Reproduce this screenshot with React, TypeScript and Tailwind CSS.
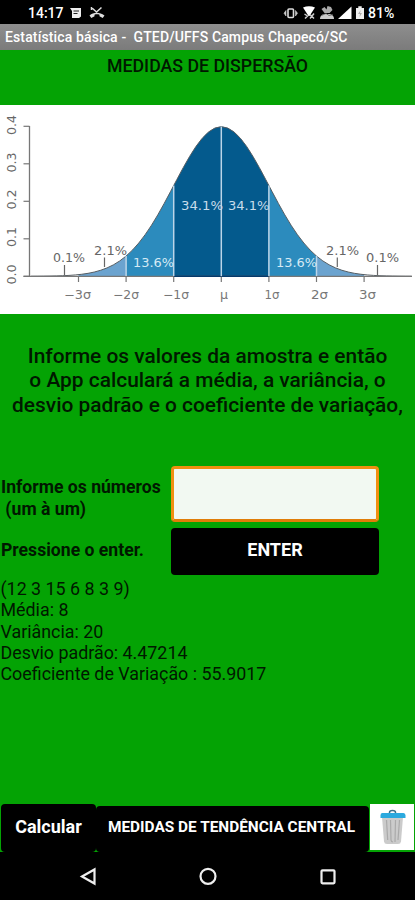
const MU = 221.3;
const SIGMA = 47.6;
const BASE = 171.3;

// normal density in chart coordinates
const px = (z: number) => MU + z * SIGMA;
const py = (z: number) => BASE - 149.6 * Math.exp((-z * z) / 2);

function points(from: number, to: number) {
  const out: string[] = [];
  for (let i = 0; i <= 60; i++) {
    const z = from + ((to - from) * i) / 60;
    out.push(`${px(z).toFixed(2)},${py(z).toFixed(2)}`);
  }
  return out.join(" ");
}

const area = (from: number, to: number) => `${px(from)},${BASE} ${points(from, to)} ${px(to)},${BASE}`;

const bands = [
  { from: -3, to: -2, fill: "#6ba3cf" },
  { from: -2, to: -1, fill: "#2c8bbd" },
  { from: -1, to: 1, fill: "#045a8d" },
  { from: 1, to: 2, fill: "#2c8bbd" },
  { from: 2, to: 3, fill: "#6ba3cf" },
];

const yTicks = [
  { label: "0.0", y: 171.3, cy: 169.5 },
  { label: "0.1", y: 133.8, cy: 132 },
  { label: "0.2", y: 96.3, cy: 94.5 },
  { label: "0.3", y: 58.8, cy: 57.5 },
  { label: "0.4", y: 21.3, cy: 20 },
];

const xTicks = [
  { label: "−3σ", z: -3, x: 64, w: 27 },
  { label: "−2σ", z: -2, x: 113, w: 26 },
  { label: "−1σ", z: -1, x: 163, w: 26 },
  { label: "μ", z: 0, x: 220, w: 8 },
  { label: "1σ", z: 1, x: 264.5, w: 15 },
  { label: "2σ", z: 2, x: 311, w: 17 },
  { label: "3σ", z: 3, x: 359, w: 17 },
];

const labels = [
  { text: "0.1%", x: 53, y: 157, w: 32, fill: "#666" },
  { text: "2.1%", x: 94, y: 150, w: 33, fill: "#666" },
  { text: "13.6%", x: 133, y: 162, w: 41, fill: "#d6eaf5" },
  { text: "34.1%", x: 181, y: 105, w: 42, fill: "#c8dceb" },
  { text: "34.1%", x: 228, y: 105, w: 41.5, fill: "#c8dceb" },
  { text: "13.6%", x: 276, y: 162, w: 41, fill: "#d6eaf5" },
  { text: "2.1%", x: 326, y: 150, w: 33, fill: "#666" },
  { text: "0.1%", x: 366, y: 157, w: 33, fill: "#666" },
];

function BellCurve() {
  return (
    <svg width="415" height="209" viewBox="0 0 415 209" className="block bg-white font-['DejaVu_Sans']">
      {bands.map((b) => (
        <polygon key={b.from} points={area(b.from, b.to)} fill={b.fill} />
      ))}
      <polyline points={points(-4, 4)} fill="none" stroke="#555d63" strokeWidth="1" />
      <path d="M23.5 171.3H412M29.5 21V171.3" stroke="#777" strokeWidth="1.3" fill="none" />
      <path d={`M${px(-1)} 171.3H${px(1)}`} stroke="#063a6b" strokeWidth="1.5" />
      {[-2, -1, 0, 1, 2].map((z) => (
        <path key={z} d={`M${px(z)} ${py(z)}V171`} stroke="#bcd5e8" strokeWidth="1.5" />
      ))}
      {yTicks.map((t) => (
        <g key={t.label}>
          <path d={`M23.5 ${t.y}H29.5`} stroke="#777" strokeWidth="1.2" />
          <text
            transform={`translate(16.2 ${t.cy}) rotate(-90)`}
            textAnchor="middle"
            textLength="20"
            lengthAdjust="spacingAndGlyphs"
            fontSize="12"
            fill="#666"
          >
            {t.label}
          </text>
        </g>
      ))}
      {xTicks.map((t) => (
        <g key={t.z}>
          <path d={`M${px(t.z)} 171.5V177`} stroke="#777" strokeWidth="1.2" />
          <text x={t.x} y="193.5" textLength={t.w} lengthAdjust="spacingAndGlyphs" fontSize="12" fill="#777">
            {t.label}
          </text>
        </g>
      ))}
      {labels.map((l) => (
        <text
          key={l.x}
          x={l.x}
          y={l.y}
          textLength={l.w}
          lengthAdjust="spacingAndGlyphs"
          fontSize="12.5"
          fill={l.fill}
        >
          {l.text}
        </text>
      ))}
      <path d="M64.5 160V170M104.5 152.5V162M337.3 152.5V162M377.5 160V170" stroke="#666" strokeWidth="1.2" />
    </svg>
  );
}

function StatusBar() {
  return (
    <div className="flex h-6 items-center bg-black pl-7 text-[14px] font-medium text-white">
      <span className="w-[42px] whitespace-nowrap pt-[3px]">14:17</span>
      <svg width="36" height="24" viewBox="70 0 36 24" className="shrink-0">
        <path d="M70 8h11v8.5l-2 1.5h-7V11z" fill="#eee" />
        <path d="M73.5 11h5.5M73.5 13.5h4" stroke="#222" strokeWidth="1" />
        <path d="M91.5 7.5l5 4.5 5-4.5M91.5 7v3" stroke="#ddd" strokeWidth="1.5" fill="none" />
        <path d="M89.5 15.5c4-3.7 10-3.7 15 0l-1.800 2.500-3.200-1.800v-1.500c-1.500-.5-3.500-.5-5 0v1.500l-3.200 1.800z" fill="#ddd" />
      </svg>
      <svg width="84" height="24" viewBox="283 0 84 24" className="ml-[177px] shrink-0">
        <rect x="288" y="9" width="5.5" height="8.5" rx="1" fill="none" stroke="#ddd" strokeWidth="1.6" />
        <path d="M286 10.5L284 13.2L286 16zM295.5 10.5l2 2.7-2 2.8z" fill="#ccc" stroke="#ccc" strokeWidth="0.6" />
        <path d="M303 7.5q6-2.5 12 0L309.5 16h-1z" fill="#fff" />
        <path d="M304.5 14l3 2-2.5 2.5M314 13.5l-4 5M310 14.5l4 4" stroke="#ccc" strokeWidth="1.5" fill="none" />
        <path d="M320 19c0-3.5 2.5-5 5-5h4c2.5 0 5 1.5 5 5z" fill="#ccc" />
        <path d="M321.5 9l3-2 2 2.5 1-3.5 3.5 1 1.5 3-3 3h-5z" fill="#aaa" />
        <path d="M321.5 15.5l4.5-2 3 2 4-1" stroke="#555" strokeWidth="0.8" fill="none" />
        <path d="M338 19L351.5 6.5V19z" fill="#fff" />
        <path d="M356 8h2.3V6.3h3.4V8h2.3v11h-8z" fill="#eee" />
        <path d="M360.7 10l-2.7 4h2l-.5 3 2.5-4h-2z" fill="#aaa" />
      </svg>
      <span className="pl-[1px] pt-[3px]">81%</span>
    </div>
  );
}

function Trash() {
  return (
    <svg width="44" height="46" viewBox="0 0 44 46" className="block bg-white">
      <path d="M12 13h21l-2 24.5q-.3 2.5-3 2.5h-11q-2.700 0-3-2.500z" fill="#cbcbcb" />
      <path d="M16.5 16l1.2 20M20.5 16l.5 20q.2 2 2 2M25.5 16l-.5 22M29.5 16l-1.5 20" stroke="#aaa" strokeWidth="1.2" fill="none" />
      <path d="M19.5 9.5v-1q0-2 3-2t3 2v1" stroke="#3b718b" strokeWidth="1.5" fill="none" />
      <path d="M12 9h21.5q2 0 2 2.5V14H10.5V11.5q0-2.5 1.5-2.5z" fill="#2ba9de" />
    </svg>
  );
}

function NavBar() {
  return (
    <div className="flex h-12 bg-black">
      <svg width="415" height="48" viewBox="0 852 415 48" fill="none" stroke="#eee" strokeWidth="2.2">
        <path d="M82 876.5L94.5 869.5V883.5z" />
        <circle cx="208" cy="876.3" r="7.5" />
        <rect x="321.5" y="870.3" width="13" height="13" rx="1" />
      </svg>
    </div>
  );
}

export default function App() {
  return (
    <div className="flex h-[900px] w-[415px] flex-col overflow-hidden bg-[#04a304] font-['Roboto',sans-serif] text-[#001800]">
      <StatusBar />
      <div className="h-[26px] bg-linear-to-b from-[#8e8e8e] to-[#7b7b7b] pl-[5px] text-[14px] leading-[27px] font-medium tracking-[0.13px] whitespace-pre text-white">
        {"Estatística básica -  GTED/UFFS Campus Chapecó/SC"}
      </div>
      <h1 className="h-[55px] pt-[5px] text-center text-[17.75px] leading-[22px] font-medium whitespace-nowrap">
        MEDIDAS DE DISPERSÃO
      </h1>
      <BellCurve />

      <div className="mt-[30px] h-[72px] text-center text-[20.9px] leading-[24.3px] font-medium whitespace-nowrap">
        <p>Informe os valores da amostra e então</p>
        <p>o App calculará a média, a variância, o</p>
        <p>desvio padrão e o coeficiente de variação,</p>
      </div>

      <div className="mt-[50px] flex h-[56px]">
        <label htmlFor="numero" className="w-[171px] pt-[10px] pl-[1px] text-[17.6px] leading-[22px] font-bold whitespace-pre">
          {"Informe os números\n (um à um)"}
        </label>
        <input
          id="numero"
          className="h-[56px] w-[208px] rounded-[4px] border-3 border-[#f09010] border-b-[#e07d08] bg-[#f2f9f2] outline-none"
        />
      </div>
      <div className="mt-[6px] flex h-[47px]">
        <span className="w-[171px] pt-[11px] pl-[1px] text-[17.6px] leading-[22px] font-bold">Pressione o enter.</span>
        <button className="h-[47px] w-[208px] rounded-[4px] bg-black pb-1 text-[18px] font-bold text-white">ENTER</button>
      </div>

      <div className="mt-[3px] pl-[0.5px] text-[17.85px] leading-[21.3px] whitespace-nowrap">
        <p>(12 3 15 6 8 3 9)</p>
        <p>Média: 8</p>
        <p>Variância: 20</p>
        <p>Desvio padrão: 4.47214</p>
        <p>Coeficiente de Variação : 55.9017</p>
      </div>

      <div className="mt-auto flex h-[48px] items-end pl-[1px]">
        <button className="h-[48px] w-[95px] rounded-[4px] bg-black pb-1 text-[18px] font-bold text-white">Calcular</button>
        <button className="h-[46px] w-[273px] rounded-[4px] bg-black pr-[2px] pb-[2px] text-[15.4px] font-bold whitespace-nowrap text-white">
          MEDIDAS DE TENDÊNCIA CENTRAL
        </button>
        <div className="ml-[1px] h-[48px] w-[44px]">
          <Trash />
        </div>
      </div>
      <NavBar />
    </div>
  );
}
